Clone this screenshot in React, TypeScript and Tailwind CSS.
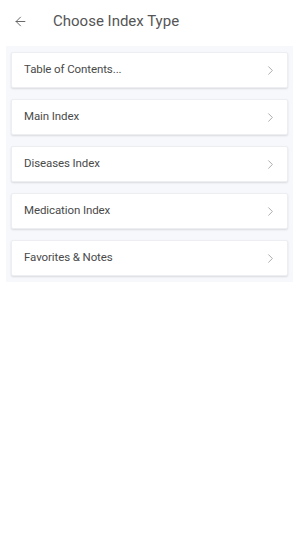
import { ChevronRight, ArrowLeft } from 'lucide-react'

const items = ['Table of Contents...', 'Main Index', 'Diseases Index', 'Medication Index', 'Favorites & Notes']

export default function App() {
  return (
    <div className="w-[300px] h-[533px] bg-white font-['Roboto',sans-serif]">
      <header className="h-[42px] flex items-center">
        <button className="w-[40px] pl-[13px] flex items-center text-[#555]">
          <ArrowLeft size={15} strokeWidth={1.4} />
        </button>
        <h1 className="ml-[13px] text-[15px] font-normal text-[#555]">Choose Index Type</h1>
      </header>
      <div className="mt-[4px] mx-[6px] w-[287px] bg-[#f7f8fc] px-[5px] py-[6px] flex flex-col gap-[11px]">
        {items.map((label) => (
          <div
            key={label}
            className="h-[36px] bg-white rounded-[2px] border border-[#eceef2] shadow-[0_1px_2px_rgba(0,0,0,0.12)] flex items-center justify-between pl-[12px] pr-[9px]"
          >
            <span className="text-[11.5px] text-[#4a4a4a] tracking-[-0.1px]">{label}</span>
            <ChevronRight size={15} strokeWidth={1.3} className="text-[#9a9a9a]" />
          </div>
        ))}
      </div>
    </div>
  )
}
